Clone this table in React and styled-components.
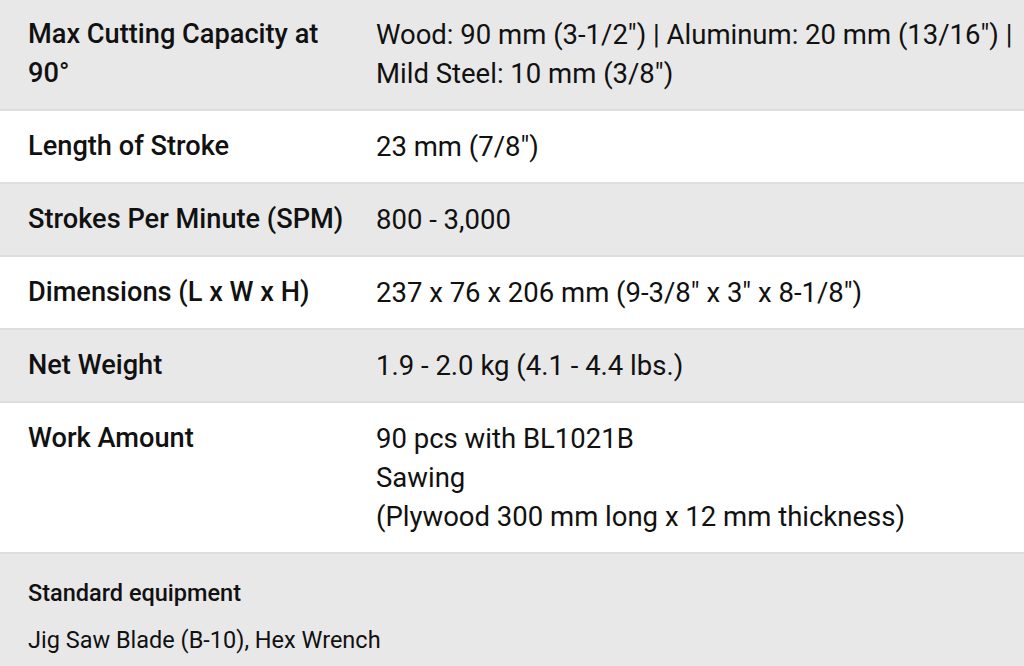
import React from "react";
import styled, { createGlobalStyle } from "styled-components";

const Global = createGlobalStyle`
  html, body { margin: 0; padding: 0; background: #fff; }
  body { font-family: Roboto, "Liberation Sans", sans-serif; color: #111; overflow: hidden; }
`;

const Wrap = styled.div`
  width: 1024px;
  margin-top: -1px;
`;

const Table = styled.div`
  display: flex;
  flex-direction: column;
`;

const Row = styled.div`
  display: grid;
  grid-template-columns: 348px 1fr;
  padding: 16px 6px 16px 28px;
  background: ${(p) => (p.$shade ? "#e8e8e8" : "#ffffff")};
  border-bottom: 2px solid #dedede;
  font-size: 27.5px;
  line-height: 39px;
`;

const Label = styled.div`
  font-weight: 500;
  font-size: 27.2px;
  padding-right: 16px;
`;

const Value = styled.div`
  font-weight: 400;
`;

const Equipment = styled.div`
  background: #e8e8e8;
  padding: 21px 28px 20px;
  display: flex;
  flex-direction: column;
  gap: 11px;
`;

const EqTitle = styled.div`
  font-size: 23.5px;
  font-weight: 500;
  line-height: 36px;
`;

const EqText = styled.div`
  font-size: 23.5px;
  font-weight: 400;
  line-height: 36px;
`;

const rows = [
  {
    label: "Max Cutting Capacity at 90°",
    value: ['Wood: 90 mm (3-1/2") | Aluminum: 20 mm (13/16") | Mild Steel: 10 mm (3/8")'],
  },
  { label: "Length of Stroke", value: ['23 mm (7/8")'] },
  { label: "Strokes Per Minute (SPM)", value: ["800 - 3,000"] },
  { label: "Dimensions (L x W x H)", value: ['237 x 76 x 206 mm (9-3/8" x 3" x 8-1/8")'] },
  { label: "Net Weight", value: ["1.9 - 2.0 kg (4.1 - 4.4 lbs.)"] },
  {
    label: "Work Amount",
    value: ["90 pcs with BL1021B", "Sawing", "(Plywood 300 mm long x 12 mm thickness)"],
  },
];

export default function App() {
  return (
    <>
      <Global />
      <Wrap>
        <Table>
          {rows.map((r, i) => (
            <Row key={r.label} $shade={i % 2 === 0}>
              <Label>{r.label}</Label>
              <Value>
                {r.value.map((v) => (
                  <div key={v}>{v}</div>
                ))}
              </Value>
            </Row>
          ))}
        </Table>
        <Equipment>
          <EqTitle>Standard equipment</EqTitle>
          <EqText>Jig Saw Blade (B-10), Hex Wrench</EqText>
        </Equipment>
      </Wrap>
    </>
  );
}
